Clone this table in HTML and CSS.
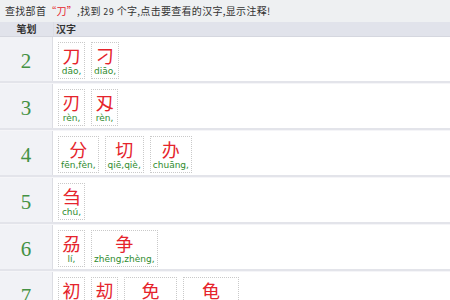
FILE: index.html
```html
<!DOCTYPE html>
<html lang="zh">
<head>
<meta charset="utf-8">
<link rel="stylesheet" href="styles.css">
</head>
<body>
<div class="bar">查找部首<span class="red">“刀”</span>,找到 <span class="num">29</span> 个字,点击要查看的汉字,显示注释!</div>
<div class="head"><div class="c1">笔划</div><div class="c2">汉字</div></div>
<div class="row">
  <div class="c1 n">2</div>
  <div class="c2">
    <span class="z"><b>刀</b><i>dāo,</i></span>
    <span class="z"><b>刁</b><i>diāo,</i></span>
  </div>
</div>
<div class="row">
  <div class="c1 n">3</div>
  <div class="c2">
    <span class="z"><b>刃</b><i>rèn,</i></span>
    <span class="z"><b>刄</b><i>rèn,</i></span>
  </div>
</div>
<div class="row">
  <div class="c1 n">4</div>
  <div class="c2">
    <span class="z"><b>分</b><i>fēn,fèn,</i></span>
    <span class="z"><b>切</b><i>qiē,qiè,</i></span>
    <span class="z"><b>办</b><i>chuāng,</i></span>
  </div>
</div>
<div class="row">
  <div class="c1 n">5</div>
  <div class="c2">
    <span class="z"><b>刍</b><i>chú,</i></span>
  </div>
</div>
<div class="row">
  <div class="c1 n">6</div>
  <div class="c2">
    <span class="z"><b>刕</b><i>lí,</i></span>
    <span class="z"><b>争</b><i>zhēng,zhèng,</i></span>
  </div>
</div>
<div class="row">
  <div class="c1 n">7</div>
  <div class="c2">
    <span class="z"><b>初</b><i>chū,</i></span>
    <span class="z"><b>刧</b><i>jié,</i></span>
    <span class="z"><b>免</b><i>miǎn,wèn,</i></span>
    <span class="z"><b>龟</b><i>guī,jūn,qiū,</i></span>
  </div>
</div>
</body>
</html>
```

FILE: styles.css
```css
html, body {
  margin: 0;
  padding: 0;
  background: #ffffff;
}
body {
  font-family: "Noto Sans CJK SC", "Liberation Sans", sans-serif;
  color: #333333;
  width: 450px;
  overflow: hidden;
}
.bar {
  height: 22px;
  line-height: 22px;
  background: #eef0f2;
  padding-left: 5px;
  font-size: 10px;
  letter-spacing: 0.3px;
  color: #333333;
  white-space: nowrap;
}
.red {
  color: #e5242c;
}
.num {
  font-family: "DejaVu Sans", sans-serif;
  font-size: 8px;
}
.head {
  display: flex;
  height: 14px;
  line-height: 14px;
  background: #e1e3eb;
  border-bottom: 1px solid #d5d7df;
  font-size: 10px;
  font-weight: bold;
  color: #333333;
}
.c1 {
  width: 53px;
  flex: none;
  border-right: 1px solid #dcdde3;
  text-align: center;
}
.head .c2 {
  padding-left: 2px;
}
.row {
  display: flex;
  border-bottom: 2px solid #e3e4ea;
}
.row + .row {
  border-top: 1px solid #f5f5f8;
}
.row .c1 {
  background: #f1f2f6;
  display: flex;
  align-items: center;
  justify-content: center;
  padding-top: 4px;
  box-sizing: border-box;
  font-family: "Liberation Serif", serif;
  font-size: 21px;
  color: #449144;
}
.row .c2 {
  flex: 1;
  display: flex;
  align-items: flex-start;
  gap: 6px;
  padding: 5px 5px 2px;
  min-height: 37px;
}
.z {
  display: flex;
  flex-direction: column;
  align-items: center;
  border: 1px dotted #c9c9c9;
  padding: 1px 2px;
  min-width: 21px;
}
.z b {
  font-weight: normal;
  font-size: 18px;
  line-height: 22px;
  color: #e5242c;
}
.z i {
  font-style: normal;
  font-family: "DejaVu Sans", sans-serif;
  font-size: 9px;
  line-height: 11px;
  color: #2e8b2e;
  white-space: nowrap;
}
```
